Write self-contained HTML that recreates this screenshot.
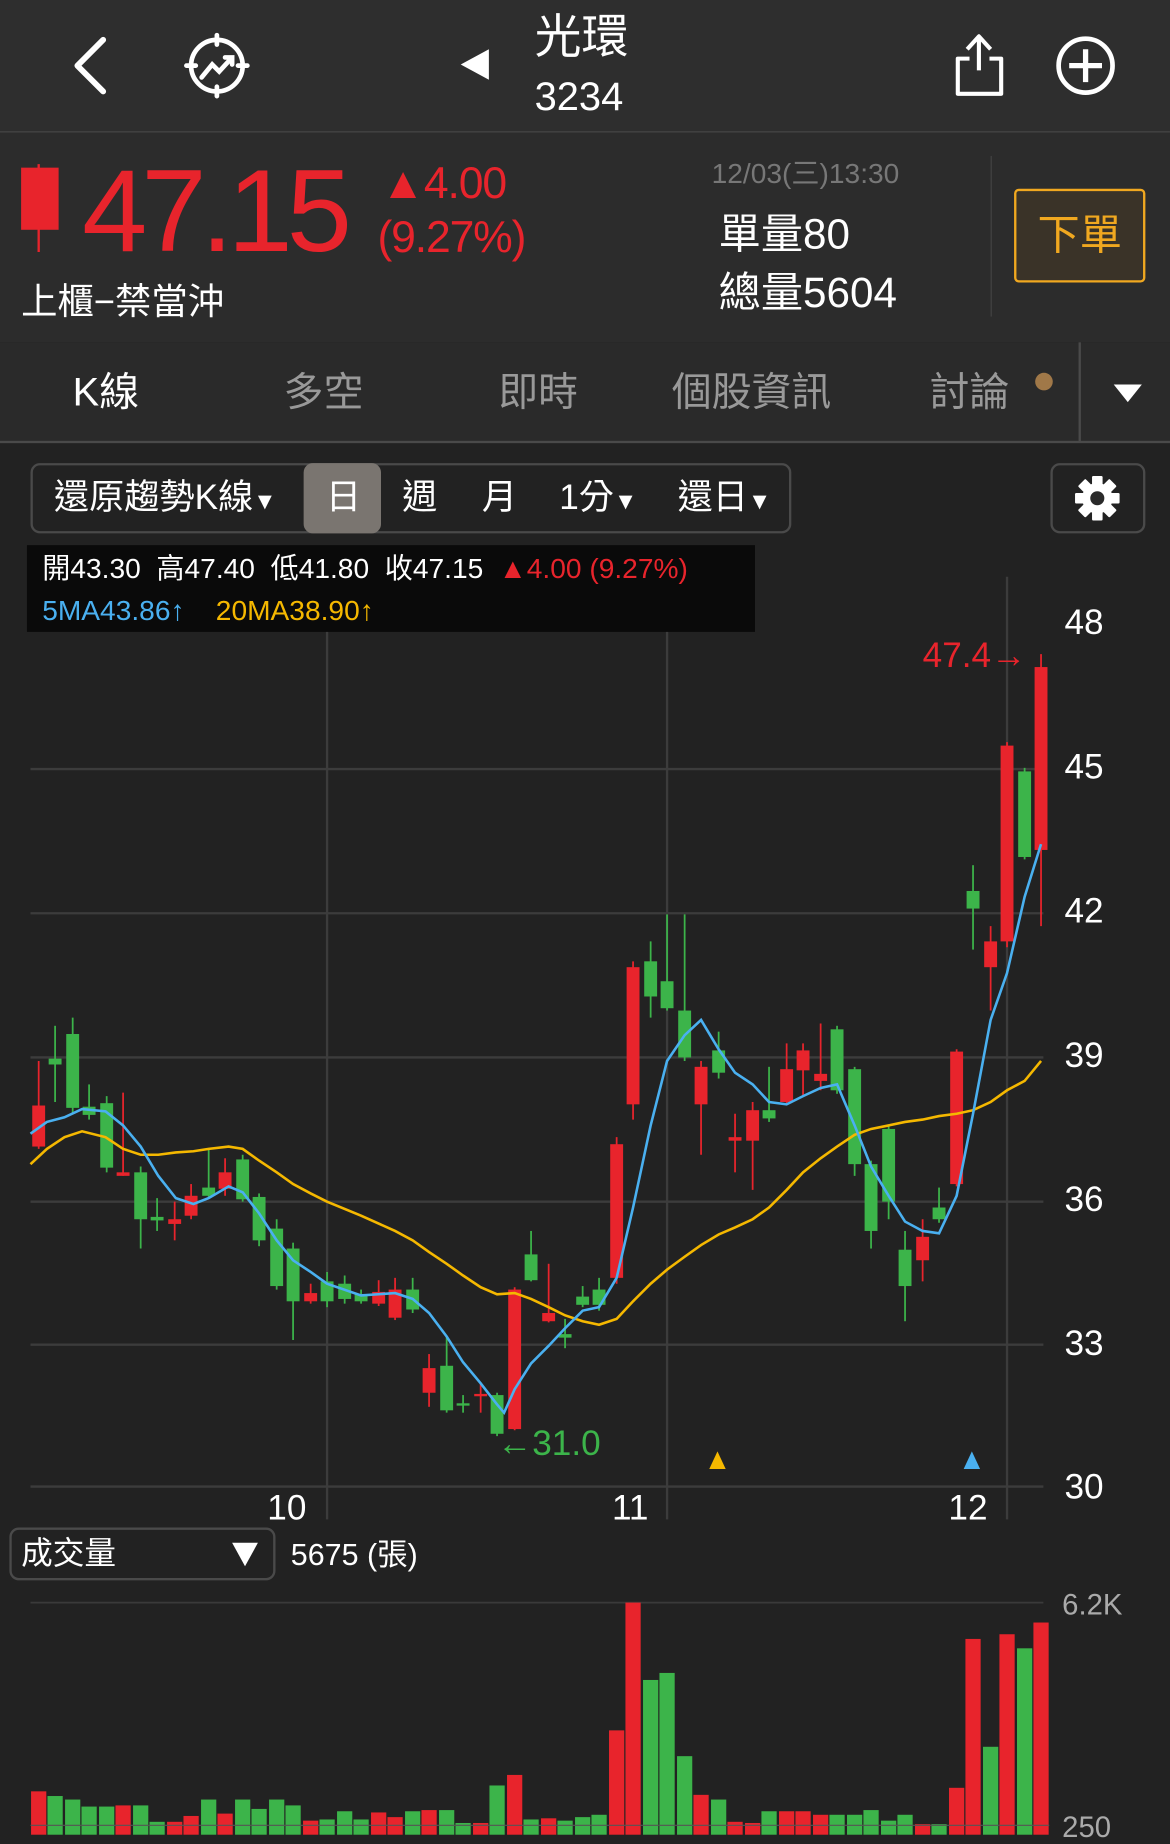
<!DOCTYPE html>
<html><head><meta charset="utf-8"><style>
*{margin:0;padding:0;box-sizing:border-box}
html,body{width:1170px;height:1839px;overflow:hidden;background:#222}
#w{position:absolute;left:0;top:0;width:998px;height:1569px;transform:scale(1.17234);transform-origin:0 0;font-family:"Liberation Sans","Noto Sans CJK TC",sans-serif;color:#fff}
.a{position:absolute;white-space:nowrap;line-height:1}
</style></head><body><div id="w">
<div class="a" style="left:0;top:0;width:998px;height:112px;background:#2e2e2e"></div>
<div class="a" style="left:0;top:112px;width:998px;height:1px;background:#4a4a4a"></div>
<div class="a" style="left:0;top:113px;width:998px;height:179px;background:#2c2c2c"></div>
<div class="a" style="left:0;top:292px;width:998px;height:84px;background:#2a2a2a"></div>
<div class="a" style="left:0;top:376px;width:998px;height:2px;background:#4a4a4a"></div>
<div class="a" style="left:920px;top:292px;width:2px;height:85px;background:#4a4a4a"></div>
<svg class="a" style="left:0;top:0" width="998" height="112">
<path d="M88 34 L66 56 L88 78" stroke="#fff" stroke-width="5" fill="none" stroke-linecap="round" stroke-linejoin="round"/>
<circle cx="185" cy="56" r="22" stroke="#fff" stroke-width="4" fill="none"/>
<path d="M185 30v8M185 74v8M159 56h8M203 56h8M172 66l9-11 6 6 11-12M192 49h6v6" stroke="#fff" stroke-width="4" fill="none" stroke-linecap="round"/>
<path d="M417 42 L393 55 L417 68Z" fill="#fff"/>
<path d="M827 50h-10v30h37v-30h-10M835 60V32M825 42l10-11 10 11" stroke="#fff" stroke-width="3.5" fill="none" stroke-linejoin="round"/>
<circle cx="926" cy="56" r="23" stroke="#fff" stroke-width="4" fill="none"/>
<path d="M926 42v28M912 56h28" stroke="#fff" stroke-width="4.5"/>
</svg>
<div class="a" style="left:456px;top:12px;font-size:40px">光環</div>
<div class="a" style="left:456px;top:66px;font-size:34px">3234</div>
<svg class="a" style="left:0;top:130px" width="60" height="90"><path d="M33 10v75" stroke="#e8242c" stroke-width="2"/><rect x="18" y="13" width="32" height="53" fill="#e8242c"/></svg>
<div class="a" style="left:70px;top:130px;font-size:100px;color:#e8242c;letter-spacing:-5px">47.15</div>
<div class="a" style="left:325px;top:138px;font-size:38px;color:#e8242c;letter-spacing:-1px">▲4.00</div>
<div class="a" style="left:322px;top:184px;font-size:38px;color:#e8242c;letter-spacing:-1px">(9.27%)</div>
<div class="a" style="left:18px;top:242px;font-size:31px">上櫃−禁當沖</div>
<div class="a" style="left:607px;top:137px;font-size:24px;color:#777">12/03(三)13:30</div>
<div class="a" style="left:613px;top:182px;font-size:36px">單量80</div>
<div class="a" style="left:613px;top:232px;font-size:36px">總量5604</div>
<div class="a" style="left:845px;top:133px;width:1px;height:137px;background:#444"></div>
<div class="a" style="left:865px;top:161px;width:112px;height:80px;border:2px solid #f0a820;border-radius:4px;background:#3a3328;color:#f0a820;font-size:36px;text-align:center;line-height:76px">下單</div>
<div class="a" style="left:62px;top:318px;font-size:34px">K線</div>
<div class="a" style="left:242px;top:318px;font-size:34px;color:#999">多空</div>
<div class="a" style="left:425px;top:318px;font-size:34px;color:#999">即時</div>
<div class="a" style="left:573px;top:318px;font-size:34px;color:#999">個股資訊</div>
<div class="a" style="left:793px;top:318px;font-size:34px;color:#999">討論</div>
<div class="a" style="left:883px;top:318px;width:15px;height:15px;border-radius:50%;background:#a07848"></div>
<div class="a" style="left:950px;top:328px;width:0;height:0;border-left:12px solid transparent;border-right:12px solid transparent;border-top:15px solid #fff"></div>
<div class="a" style="left:26px;top:395px;width:649px;height:60px;border:2px solid #4a4a4a;border-radius:8px"></div>
<div class="a" style="left:259px;top:395px;width:66px;height:60px;background:#7a7570;border-radius:8px"></div>
<div class="a" style="left:46px;top:410px;font-size:30px">還原趨勢K線<span style="font-size:20px">▼</span></div>
<div class="a" style="left:278px;top:410px;font-size:30px">日</div>
<div class="a" style="left:343px;top:410px;font-size:30px">週</div>
<div class="a" style="left:411px;top:410px;font-size:30px">月</div>
<div class="a" style="left:477px;top:410px;font-size:30px">1分<span style="font-size:20px">▼</span></div>
<div class="a" style="left:578px;top:410px;font-size:30px">還日<span style="font-size:20px">▼</span></div>
<div class="a" style="left:896px;top:395px;width:81px;height:60px;border:2px solid #4a4a4a;border-radius:8px"></div>
<svg class="a" style="left:916px;top:405px" width="40" height="40" viewBox="-20 -20 40 40"><g fill="#fff"><circle r="13"/><g id="t"><rect x="-4.5" y="-19" width="9" height="9" rx="1"/></g><use href="#t" transform="rotate(45)"/><use href="#t" transform="rotate(90)"/><use href="#t" transform="rotate(135)"/><use href="#t" transform="rotate(180)"/><use href="#t" transform="rotate(225)"/><use href="#t" transform="rotate(270)"/><use href="#t" transform="rotate(315)"/></g><circle r="6" fill="#2a2a2a"/></svg>
<svg id="ch" class="a" style="left:0;top:378px" width="998" height="1191" viewBox="0 378 998 1191"></svg>
<div class="a" style="left:23px;top:465px;width:621px;height:74px;background:#0a0a0a"></div>
<div class="a" style="left:36px;top:474px;font-size:24px">開43.30&nbsp; 高47.40&nbsp; 低41.80&nbsp; 收47.15&nbsp; <span style="color:#e8242c">▲4.00 (9.27%)</span></div>
<div class="a" style="left:36px;top:510px;font-size:24px;color:#4ab0f0">5MA43.86↑ &nbsp;&nbsp;&nbsp;<span style="color:#f5b800">20MA38.90↑</span></div>
<div class="a" style="left:908px;top:517px;font-size:30px">48</div>
<div class="a" style="left:908px;top:640px;font-size:30px">45</div>
<div class="a" style="left:908px;top:763px;font-size:30px">42</div>
<div class="a" style="left:908px;top:886px;font-size:30px">39</div>
<div class="a" style="left:908px;top:1009px;font-size:30px">36</div>
<div class="a" style="left:908px;top:1132px;font-size:30px">33</div>
<div class="a" style="left:908px;top:1254px;font-size:30px">30</div>
<div class="a" style="left:228px;top:1272px;font-size:30px">10</div>
<div class="a" style="left:522px;top:1272px;font-size:30px">11</div>
<div class="a" style="left:809px;top:1272px;font-size:30px">12</div>
<div class="a" style="left:787px;top:545px;font-size:30px;color:#e8242c">47.4→</div>
<div class="a" style="left:424px;top:1217px;font-size:30px;color:#3cb44a">←31.0</div>
<div class="a" style="left:8px;top:1303px;width:227px;height:45px;border:2px solid #4a4a4a;border-radius:8px"></div>
<div class="a" style="left:18px;top:1312px;font-size:27px">成交量</div>
<div class="a" style="left:198px;top:1316px;width:0;height:0;border-left:11px solid transparent;border-right:11px solid transparent;border-top:20px solid #fff"></div>
<div class="a" style="left:248px;top:1313px;font-size:26px">5675 (張)</div>
<div class="a" style="left:906px;top:1357px;font-size:25px;color:#aaa">6.2K</div>
<div class="a" style="left:906px;top:1547px;font-size:25px;color:#aaa">250</div>
</div>
<script>
var R='#e8242c',G='#3cb44a',s='';
var C=[
[33,R,943,978,905,980],[47,G,903,908,875,940],[62,G,882,945,868,950],[76,G,944,951,925,955],[91,G,941,996,935,1000],[105,R,1000,1003,932,1003],[120,G,1000,1040,995,1065],[134,G,1038,1041,1022,1050],[149,R,1040,1044,1025,1058],[163,R,1020,1037,1010,1040],[178,G,1013,1020,980,1022],[192,R,1000,1014,988,1020],[207,G,989,1023,985,1025],[221,G,1021,1058,1018,1063],[236,G,1048,1097,1040,1100],[250,G,1065,1110,1060,1143],[265,R,1103,1110,1095,1112],[279,G,1093,1110,1085,1115],[294,G,1095,1108,1088,1112],[308,G,1104,1110,1100,1112],[323,R,1102,1112,1092,1114],[337,R,1100,1124,1090,1126],[352,G,1100,1117,1090,1120],[366,R,1167,1188,1155,1200],[381,G,1165,1203,1140,1205],[395,G,1197,1199,1190,1205],[410,R,1189,1191,1180,1205],[424,G,1190,1223,1188,1225],[439,R,1100,1219,1098,1220],[453,G,1070,1092,1050,1093],[468,R,1120,1127,1078,1128],[482,G,1138,1141,1125,1150],[497,G,1106,1113,1097,1115],[511,G,1100,1113,1090,1118],[526,R,976,1090,970,1095],[540,R,825,942,820,955],[555,G,820,850,803,868],[569,G,837,860,780,862],[584,G,862,902,780,905],[598,R,910,942,905,985],[613,G,896,915,880,920],[627,R,970,973,950,1000],[642,R,947,973,940,1015],[656,G,947,954,910,957],[671,R,912,940,890,942],[685,R,896,913,890,935],[700,R,916,922,873,930],[714,G,878,930,875,933],[729,G,912,993,910,1003],[743,G,993,1050,990,1065],[758,G,963,1025,960,1040],[772,G,1066,1097,1050,1127],[787,R,1055,1075,1040,1093],[801,G,1030,1040,1013,1043],[816,R,897,1010,895,1012],[830,G,760,775,738,810],[845,R,803,825,790,862],[859,R,636,803,633,808],[874,G,658,731,655,733],[888,R,569,725,558,790]];
var V=[1528,1532,1535,1541,1541,1540,1540,1554,1554,1549,1535,1547,1535,1543,1535,1540,1553,1552,1545,1552,1546,1550,1545,1544,1544,1555,1555,1523,1514,1552,1551,1553,1550,1548,1476,1367,1433,1427,1498,1531,1535,1554,1555,1545,1545,1545,1548,1548,1548,1544,1553,1548,1556,1556,1525,1398,1490,1394,1406,1384];
var VC={55:R,56:G};
[656,779,902,1025,1147,1268].forEach(function(y){s+='<line x1="26" x2="890" y1="'+y+'" y2="'+y+'" stroke="#3c3c3c" stroke-width="2"/>';});
[279,569,859].forEach(function(x){s+='<line x1="'+x+'" x2="'+x+'" y1="492" y2="1296" stroke="#3c3c3c" stroke-width="2"/>';});
s+='<line x1="26" x2="890" y1="1367" y2="1367" stroke="#3a3a3a" stroke-width="1.5"/>';
C.forEach(function(c,i){var h=Math.max(c[3]-c[2],2);
s+='<line x1="'+c[0]+'" x2="'+c[0]+'" y1="'+c[4]+'" y2="'+c[5]+'" stroke="'+c[1]+'" stroke-width="1.5"/>';
s+='<rect x="'+(c[0]-5.5)+'" y="'+c[2]+'" width="11" height="'+h+'" fill="'+c[1]+'"/>';
s+='<rect x="'+(c[0]-6.5)+'" y="'+V[i]+'" width="13" height="'+(1565-V[i])+'" fill="'+(VC[i]||c[1])+'"/>';});
s+='<line x1="26" x2="895" y1="1557" y2="1557" stroke="#555" stroke-width="1"/>';
var b=[[26,967],[40,957],[55,953],[70,946],[90,948],[105,960],[120,978],[135,1003],[150,1022],[165,1027],[178,1022],[195,1012],[207,1017],[221,1035],[236,1058],[250,1075],[265,1085],[279,1095],[308,1105],[337,1103],[352,1108],[366,1120],[381,1140],[395,1162],[410,1180],[424,1198],[430,1205],[439,1185],[453,1163],[468,1148],[482,1133],[497,1118],[511,1115],[526,1090],[540,1030],[555,960],[569,905],[584,883],[598,870],[613,895],[627,915],[642,925],[656,940],[671,942],[685,935],[700,928],[714,925],[729,960],[743,995],[758,1020],[772,1042],[787,1050],[801,1052],[816,1020],[830,950],[845,870],[859,830],[874,765],[888,720]];
var o=[[26,993],[40,980],[55,970],[70,965],[90,970],[105,980],[120,985],[135,985],[150,983],[165,982],[178,980],[195,978],[207,980],[221,990],[236,1000],[250,1010],[265,1018],[279,1025],[308,1037],[337,1050],[352,1058],[366,1068],[381,1078],[395,1088],[410,1098],[424,1104],[439,1103],[453,1108],[468,1115],[482,1122],[497,1127],[511,1130],[526,1125],[540,1110],[555,1095],[569,1083],[584,1072],[598,1062],[613,1053],[627,1047],[642,1040],[656,1030],[671,1015],[685,1000],[700,988],[714,978],[729,968],[743,963],[758,960],[772,957],[787,955],[801,952],[816,950],[830,947],[845,940],[859,930],[874,922],[888,905]];
s+='<polyline points="'+o.join(' ')+'" fill="none" stroke="#f5b800" stroke-width="2.2"/>';
s+='<polyline points="'+b.join(' ')+'" fill="none" stroke="#4ab0f0" stroke-width="2.2"/>';
s+='<path d="M612 1238l-7 15h14z" fill="#f5b800"/><path d="M829 1238l-7 15h14z" fill="#4ab0f0"/>';
document.getElementById('ch').innerHTML=s;
</script>
</body></html>
